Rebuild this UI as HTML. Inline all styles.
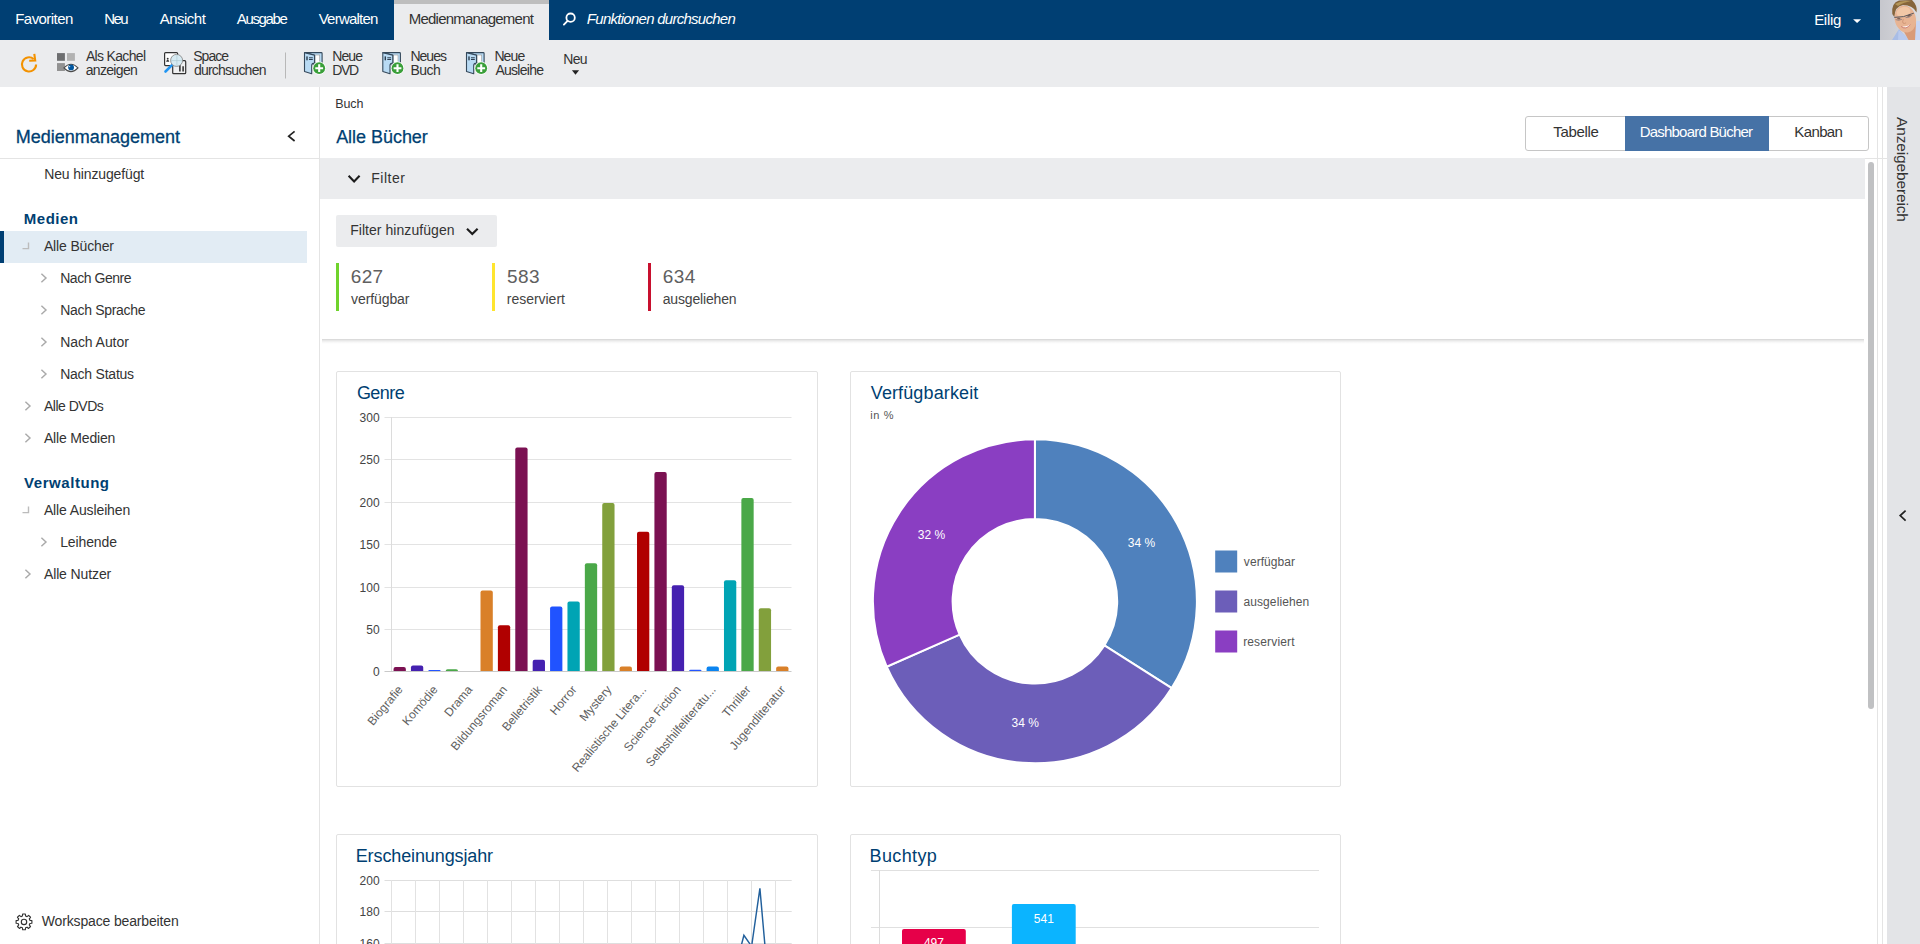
<!DOCTYPE html>
<html lang="de"><head><meta charset="utf-8"><title>Medienmanagement</title>
<style>
html,body{margin:0;padding:0;width:1920px;height:944px;overflow:hidden;}
#root{position:relative;width:1920px;height:944px;overflow:hidden;background:#fff;}
body{width:1920px;height:944px;overflow:hidden;background:#fff;position:relative;font-family:"Liberation Sans",sans-serif;}
.a{position:absolute;}
.t{position:absolute;white-space:nowrap;font-family:"Liberation Sans",sans-serif;}
svg{position:absolute;left:0;top:0;overflow:visible;}
svg text{font-family:"Liberation Sans",sans-serif;}
.card{position:absolute;border:1px solid #e2e2e2;border-radius:2px;background:#fff;box-sizing:border-box;}

</style></head><body><div id="root">
<div class="a" style="left:0;top:0;width:1920px;height:40px;background:#003f73"></div>
<div class="a" style="left:394px;top:0;width:155px;height:40px;background:#ebecee;border-top:4px solid #bebebe;box-sizing:border-box"></div>
<div class="a" style="left:0;top:40px;width:1920px;height:47px;background:#ebecee"></div>
<div class="a" style="left:319px;top:87px;width:1px;height:857px;background:#e4e4e4"></div>
<div class="a" style="left:0;top:158px;width:1887px;height:1px;background:#e4e4e4"></div>
<div class="a" style="left:0;top:231px;width:307px;height:32px;background:#e2ecf4"></div>
<div class="a" style="left:0;top:231px;width:4px;height:32px;background:#003f73"></div>
<div class="a" style="left:320px;top:158px;width:1545px;height:41px;background:#ebecee"></div>
<div class="a" style="left:322px;top:339px;width:1542px;height:5px;background:linear-gradient(to bottom,rgba(0,0,0,0.17),rgba(0,0,0,0.09) 30%,rgba(0,0,0,0.03) 65%,rgba(0,0,0,0))"></div>
<div class="a" style="left:336px;top:215px;width:161px;height:32px;background:#ebecee;border-radius:2px"></div>
<div class="a" style="left:336px;top:263px;width:3px;height:48px;background:#6fd32c"></div>
<div class="a" style="left:492px;top:263px;width:3px;height:48px;background:#ffe52e"></div>
<div class="a" style="left:648px;top:263px;width:3px;height:48px;background:#c8102e"></div>
<div class="a" style="left:1525px;top:116px;width:344px;height:35px;border:1px solid #c6c6c6;border-radius:3px;box-sizing:border-box;background:#fff"></div>
<div class="a" style="left:1625px;top:116px;width:144px;height:35px;background:#4672a6"></div>
<div class="a" style="left:1877px;top:87px;width:1px;height:857px;background:#e4e4e4"></div>
<div class="a" style="left:1882px;top:87px;width:1px;height:857px;background:#e4e4e4"></div>
<div class="a" style="left:1887px;top:87px;width:33px;height:857px;background:#e3e4e7"></div>
<div class="a" style="left:1868px;top:162px;width:6px;height:547px;background:#c0c1c3;border-radius:3px"></div>
<span class="v" style="position:absolute;white-space:nowrap;left:1894px;top:117px;font-size:15.5px;line-height:16px;color:#333;writing-mode:vertical-rl;letter-spacing:-0.15px">Anzeigebereich</span>
<div class="card" style="left:336px;top:371px;width:482px;height:416px"></div>
<div class="card" style="left:850px;top:371px;width:491px;height:416px"></div>
<div class="card" style="left:336px;top:834px;width:482px;height:416px"></div>
<div class="card" style="left:850px;top:834px;width:491px;height:416px"></div>
<svg width="1920" height="944" viewBox="0 0 1920 944">
<defs>
<filter id="bl" x="-10%" y="-10%" width="120%" height="120%"><feGaussianBlur stdDeviation="0.7"/></filter>
<clipPath id="avc"><rect x="1880" y="0" width="40" height="40"/></clipPath>
<linearGradient id="avg" x1="0" x2="1" y1="0" y2="0"><stop offset="0" stop-color="#c6c7cd"/><stop offset="1" stop-color="#dcdce0"/></linearGradient>
<g id="book">
 <path d="M0.6,0.7 H17.4 Q18.2,0.7 18.2,1.5 V14 H10 V3.2 Z" fill="#b9dbf4" stroke="#35495b" stroke-width="1.1" stroke-linejoin="round"/>
 <rect x="11.2" y="3.1" width="4.6" height="7.4" fill="#fff" stroke="#999" stroke-width="0.6"/>
 <path d="M0.6,0.9 L10.6,3.2 V11.2 Q7.8,11.4 7.8,13.4 V21.8 L0.6,19.6 Z" fill="#b9dbf4" stroke="#35495b" stroke-width="1.1" stroke-linejoin="round"/>
 <rect x="2.4" y="4.5" width="1.4" height="3.9" fill="#2c3e4e"/>
 <path d="M5.1,5.9 H8.9 M5.1,7.6 H8.9" stroke="#2c3e4e" stroke-width="1"/>
 <circle cx="15.3" cy="16.3" r="6.6" fill="#fff"/>
 <circle cx="15.3" cy="16.3" r="5.9" fill="#3a9f3a"/>
 <path d="M11.4,16.3 H19.2 M15.3,12.4 V20.2" stroke="#fff" stroke-width="2.1"/>
</g>
</defs>
<circle cx="570.6" cy="17.7" r="4.2" fill="none" stroke="#fff" stroke-width="1.8"/><path d="M567.6,20.9 L563.9,24.6" stroke="#fff" stroke-width="1.9" stroke-linecap="round"/>
<path d="M1853.1,19.2 h8 l-4,3.8 z" fill="#fff"/>
<g clip-path="url(#avc)"><rect x="1880" y="0" width="40" height="40" fill="url(#avg)"/>
<g filter="url(#bl)">
<path d="M1892,40 L1899,29 L1908,40 Z" fill="#a9bde6"/>
<path d="M1898,40 L1898.5,30 L1906,36 L1908.5,40 Z" fill="#b9caee"/>
<path d="M1914,40 L1916.5,21 L1920,21 L1920,40 Z" fill="#c9d6f4"/>
<path d="M1903,30 L1916,22 L1915,40 L1908.5,40 Z" fill="#d99a78"/>
<ellipse cx="1905.3" cy="19" rx="10.6" ry="13.6" transform="rotate(-14 1905.3 19)" fill="#e8b493"/>
<ellipse cx="1903.5" cy="12" rx="7" ry="5" transform="rotate(-14 1903.5 12)" fill="#f1c7a6"/>
<path d="M1892.3,14 Q1891,3 1899,0.5 L1912,0 Q1918,6 1916.5,12.5 Q1913,5 1903,5 Q1895,6 1894.3,17 Z" fill="#86653a"/>
<path d="M1895,4 Q1903,-1 1912,2 Q1906,1 1898,6 Z" fill="#b39558"/>
<path d="M1894.3,17.4 L1903.5,16.6 L1913.8,13.2" stroke="#55555c" stroke-width="1.0" fill="none"/>
<path d="M1895.6,19.6 q3.2,1.6 6.4,-0.4 M1905.6,17.6 q3.6,0.4 6.6,-2.6" stroke="#7d747c" stroke-width="0.9" fill="none" opacity="0.8"/>
<ellipse cx="1898.8" cy="18.6" rx="1.7" ry="0.9" fill="#5c4a44" opacity="0.75"/><ellipse cx="1909" cy="15.7" rx="1.8" ry="0.9" transform="rotate(-18 1909 15.7)" fill="#5c4a44" opacity="0.75"/>
<path d="M1903.3,19 q-1.2,3.4 -0.2,4.2 q1.6,0.6 3,-0.4" stroke="#c98f70" stroke-width="0.8" fill="none"/>
<path d="M1901.2,26 Q1906,27.6 1910,24.2 Q1907,29.6 1901.2,26 Z" fill="#fff"/>
<path d="M1901,26.4 Q1906,30.5 1910.3,24.4" stroke="#c97f7a" stroke-width="0.9" fill="none"/>
</g></g>
<path d="M36.1,64.4 A7.1,7.1 0 1 1 33.6,59" fill="none" stroke="#f39200" stroke-width="2.1"/><path d="M29.2,60.7 L35.2,60.4 L34.3,53.9" fill="none" stroke="#f39200" stroke-width="2.1"/>
<rect x="57" y="53.1" width="7.9" height="7.7" fill="#6d6e70"/><rect x="67" y="53.1" width="7.9" height="7.7" fill="#b2b2b2"/><rect x="57" y="63.1" width="7.9" height="7.9" fill="#929292"/>
<path d="M63.9,67.9 Q71,60.6 78,67.9 Q71,75.4 63.9,67.9 Z" fill="#fff" stroke="#4a4a4a" stroke-width="1.1"/><circle cx="71.1" cy="67.4" r="2.9" fill="#00569f"/><circle cx="69.6" cy="66.6" r="0.7" fill="#cfe3f5"/>
<rect x="164.6" y="52.6" width="13" height="13" rx="1" fill="#fff" stroke="#333" stroke-width="1.2"/>
<path d="M166.1,61.8 L166.9,59.9 h1.6 l0.8,1.9 z" fill="#333"/><circle cx="167.7" cy="58.7" r="0.95" fill="#333"/>
<rect x="172.7" y="60.7" width="13" height="13" rx="1" fill="#eff0f1" stroke="#333" stroke-width="1.2"/>
<path d="M179.9,64.9 V71.6 M183.1,66.3 V71.6" stroke="#2a2a2a" stroke-width="1.5"/>
<path d="M172.2,64.9 L165.5,71.5" stroke="#2196f3" stroke-width="2.6" stroke-linecap="round"/>
<circle cx="176.6" cy="60.4" r="6" fill="#d7ebf3" stroke="#8a8a8a" stroke-width="0.9"/><path d="M176.9,55 V65.8 M171,60.6 H182" stroke="#a9c4cc" stroke-width="0.6"/>
<rect x="285" y="52.5" width="1" height="26" fill="#b8b8b8"/>
<use href="#book" x="303.9" y="51.9"/>
<use href="#book" x="382.2" y="51.9"/>
<use href="#book" x="465.9" y="51.9"/>
<path d="M571.9,70.2 h7.2 l-3.6,4.6 z" fill="#222"/>
<path d="M294.6,131.4 L288.7,136.2 L294.6,141" fill="none" stroke="#222" stroke-width="1.7"/>
<path d="M41.4,273.7 L46.0,278 L41.4,282.3" fill="none" stroke="#aaaaaa" stroke-width="1.45"/>
<path d="M41.4,305.7 L46.0,310 L41.4,314.3" fill="none" stroke="#aaaaaa" stroke-width="1.45"/>
<path d="M41.4,337.7 L46.0,342 L41.4,346.3" fill="none" stroke="#aaaaaa" stroke-width="1.45"/>
<path d="M41.4,369.7 L46.0,374 L41.4,378.3" fill="none" stroke="#aaaaaa" stroke-width="1.45"/>
<path d="M41.4,537.7 L46.0,542 L41.4,546.3" fill="none" stroke="#aaaaaa" stroke-width="1.45"/>
<path d="M25.4,401.7 L30.0,406 L25.4,410.3" fill="none" stroke="#aaaaaa" stroke-width="1.45"/>
<path d="M25.4,433.7 L30.0,438 L25.4,442.3" fill="none" stroke="#aaaaaa" stroke-width="1.45"/>
<path d="M25.4,569.7 L30.0,574 L25.4,578.3" fill="none" stroke="#aaaaaa" stroke-width="1.45"/>
<path d="M22.5,248.6 H28.5 V242.6" fill="none" stroke="#bcbcbc" stroke-width="1.4"/>
<path d="M22.5,512.6 H28.5 V506.6" fill="none" stroke="#bcbcbc" stroke-width="1.4"/>
<path d="M22.43,916.01 L22.65,914.02 L25.35,914.02 L25.57,916.01 L27.06,916.62 L28.62,915.37 L30.53,917.28 L29.28,918.84 L29.89,920.33 L31.88,920.55 L31.88,923.25 L29.89,923.47 L29.28,924.96 L30.53,926.52 L28.62,928.43 L27.06,927.18 L25.57,927.79 L25.35,929.78 L22.65,929.78 L22.43,927.79 L20.94,927.18 L19.38,928.43 L17.47,926.52 L18.72,924.96 L18.11,923.47 L16.12,923.25 L16.12,920.55 L18.11,920.33 L18.72,918.84 L17.47,917.28 L19.38,915.37 L20.94,916.62 Z" fill="none" stroke="#333" stroke-width="1.15" stroke-linejoin="round"/><circle cx="24.0" cy="921.9" r="2.7" fill="none" stroke="#333" stroke-width="1.15"/>
<path d="M348.6,175.8 L354.1,181.4 L359.6,175.8" fill="none" stroke="#1c1c1c" stroke-width="2.1"/>
<path d="M467,228.7 L472.3,234.1 L477.6,228.7" fill="none" stroke="#1c1c1c" stroke-width="2.1"/>
<path d="M1905.6,510.6 L1900.2,515.6 L1905.6,520.6" fill="none" stroke="#222" stroke-width="1.7"/>
<rect x="384.5" y="629" width="407.0" height="1" fill="#e3e3e3"/>
<rect x="384.5" y="587" width="407.0" height="1" fill="#e3e3e3"/>
<rect x="384.5" y="544" width="407.0" height="1" fill="#e3e3e3"/>
<rect x="384.5" y="502" width="407.0" height="1" fill="#e3e3e3"/>
<rect x="384.5" y="459" width="407.0" height="1" fill="#e3e3e3"/>
<rect x="384.5" y="417" width="407.0" height="1" fill="#e3e3e3"/>
<rect x="391.0" y="417.0" width="1" height="254.5" fill="#dcdcdc"/>
<text x="379.6" y="675.90" font-size="12" fill="#444" text-anchor="end">0</text>
<text x="379.6" y="633.90" font-size="12" fill="#444" text-anchor="end">50</text>
<text x="379.6" y="591.90" font-size="12" fill="#444" text-anchor="end">100</text>
<text x="379.6" y="548.90" font-size="12" fill="#444" text-anchor="end">150</text>
<text x="379.6" y="506.90" font-size="12" fill="#444" text-anchor="end">200</text>
<text x="379.6" y="463.90" font-size="12" fill="#444" text-anchor="end">250</text>
<text x="379.6" y="421.90" font-size="12" fill="#444" text-anchor="end">300</text>
<path d="M393.55,671.0 V669.10 Q393.55,667.10 395.55,667.10 H403.85 Q405.85,667.10 405.85,669.10 V671.0 Z" fill="#7b1152"/>
<path d="M410.94,671.0 V667.49 Q410.94,665.49 412.94,665.49 H421.24 Q423.24,665.49 423.24,667.49 V671.0 Z" fill="#4521b0"/>
<path d="M428.33,671.0 V671.00 Q428.33,670.07 429.26,670.07 H439.70 Q440.63,670.07 440.63,671.00 V671.0 Z" fill="#2456ff"/>
<path d="M445.72,671.0 V671.00 Q445.72,669.13 447.59,669.13 H456.15 Q458.02,669.13 458.02,671.00 V671.0 Z" fill="#4aa848"/>
<path d="M480.50,671.0 V592.41 Q480.50,590.41 482.50,590.41 H490.80 Q492.80,590.41 492.80,592.41 V671.0 Z" fill="#d98029"/>
<path d="M497.89,671.0 V627.19 Q497.89,625.19 499.89,625.19 H508.19 Q510.19,625.19 510.19,627.19 V671.0 Z" fill="#b00000"/>
<path d="M515.28,671.0 V449.46 Q515.28,447.46 517.28,447.46 H525.58 Q527.58,447.46 527.58,449.46 V671.0 Z" fill="#7b1152"/>
<path d="M532.68,671.0 V661.72 Q532.68,659.72 534.68,659.72 H542.98 Q544.98,659.72 544.98,661.72 V671.0 Z" fill="#4521b0"/>
<path d="M550.07,671.0 V608.53 Q550.07,606.53 552.07,606.53 H560.37 Q562.37,606.53 562.37,608.53 V671.0 Z" fill="#2053ff"/>
<path d="M567.46,671.0 V603.44 Q567.46,601.44 569.46,601.44 H577.76 Q579.76,601.44 579.76,603.44 V671.0 Z" fill="#00a4b4"/>
<path d="M584.85,671.0 V565.26 Q584.85,563.26 586.85,563.26 H595.15 Q597.15,563.26 597.15,565.26 V671.0 Z" fill="#4aa848"/>
<path d="M602.24,671.0 V505.03 Q602.24,503.03 604.24,503.03 H612.54 Q614.54,503.03 614.54,505.03 V671.0 Z" fill="#82a03c"/>
<path d="M619.63,671.0 V668.42 Q619.63,666.42 621.63,666.42 H629.93 Q631.93,666.42 631.93,668.42 V671.0 Z" fill="#d98029"/>
<path d="M637.02,671.0 V533.87 Q637.02,531.87 639.02,531.87 H647.32 Q649.32,531.87 649.32,533.87 V671.0 Z" fill="#b00000"/>
<path d="M654.42,671.0 V474.07 Q654.42,472.07 656.42,472.07 H664.72 Q666.72,472.07 666.72,474.07 V671.0 Z" fill="#7b1152"/>
<path d="M671.81,671.0 V587.32 Q671.81,585.32 673.81,585.32 H682.11 Q684.11,585.32 684.11,587.32 V671.0 Z" fill="#4521b0"/>
<path d="M689.20,671.0 V671.00 Q689.20,669.73 690.47,669.73 H700.23 Q701.50,669.73 701.50,671.00 V671.0 Z" fill="#2456ff"/>
<path d="M706.59,671.0 V668.59 Q706.59,666.59 708.59,666.59 H716.89 Q718.89,666.59 718.89,668.59 V671.0 Z" fill="#0b84f0"/>
<path d="M723.98,671.0 V582.23 Q723.98,580.23 725.98,580.23 H734.28 Q736.28,580.23 736.28,582.23 V671.0 Z" fill="#00a4b4"/>
<path d="M741.37,671.0 V499.94 Q741.37,497.94 743.37,497.94 H751.67 Q753.67,497.94 753.67,499.94 V671.0 Z" fill="#4aa848"/>
<path d="M758.76,671.0 V610.22 Q758.76,608.22 760.76,608.22 H769.06 Q771.06,608.22 771.06,610.22 V671.0 Z" fill="#82a03c"/>
<path d="M776.15,671.0 V668.42 Q776.15,666.42 778.15,666.42 H786.45 Q788.45,666.42 788.45,668.42 V671.0 Z" fill="#d98029"/>
<rect x="384.5" y="671.0" width="407.0" height="1" fill="#c9c9c9"/>
<text transform="translate(403.40,689.90) rotate(-50)" font-size="12" fill="#606060" text-anchor="end">Biografie</text>
<text transform="translate(438.18,689.90) rotate(-50)" font-size="12" fill="#606060" text-anchor="end">Komödie</text>
<text transform="translate(472.96,689.90) rotate(-50)" font-size="12" fill="#606060" text-anchor="end">Drama</text>
<text transform="translate(507.74,689.90) rotate(-50)" font-size="12" fill="#606060" text-anchor="end">Bildungsroman</text>
<text transform="translate(542.53,689.90) rotate(-50)" font-size="12" fill="#606060" text-anchor="end">Belletristik</text>
<text transform="translate(577.31,689.90) rotate(-50)" font-size="12" fill="#606060" text-anchor="end">Horror</text>
<text transform="translate(612.09,689.90) rotate(-50)" font-size="12" fill="#606060" text-anchor="end">Mystery</text>
<text transform="translate(646.87,689.90) rotate(-50)" font-size="12" fill="#606060" text-anchor="end">Realistische Litera...</text>
<text transform="translate(681.66,689.90) rotate(-50)" font-size="12" fill="#606060" text-anchor="end">Science Fiction</text>
<text transform="translate(716.44,689.90) rotate(-50)" font-size="12" fill="#606060" text-anchor="end">Selbsthilfeliteratu...</text>
<text transform="translate(751.22,689.90) rotate(-50)" font-size="12" fill="#606060" text-anchor="end">Thriller</text>
<text transform="translate(786.00,689.90) rotate(-50)" font-size="12" fill="#606060" text-anchor="end">Jugendliteratur</text>
<path d="M1034.90,439.30 A162.0,162.0 0 0 1 1171.67,688.12 L1104.38,645.41 A82.3,82.3 0 0 0 1034.90,519.00 Z" fill="#4f81bd" stroke="#fff" stroke-width="2"/>
<path d="M1171.67,688.12 A162.0,162.0 0 0 1 886.70,666.72 L959.61,634.54 A82.3,82.3 0 0 0 1104.38,645.41 Z" fill="#6c5eb9" stroke="#fff" stroke-width="2"/>
<path d="M886.70,666.72 A162.0,162.0 0 0 1 1034.90,439.30 L1034.90,519.00 A82.3,82.3 0 0 0 959.61,634.54 Z" fill="#8a3ec2" stroke="#fff" stroke-width="2"/>
<text x="1141.4" y="546.9" font-size="12" fill="#fff" text-anchor="middle">34 %</text>
<text x="1025.3" y="727.2" font-size="12" fill="#fff" text-anchor="middle">34 %</text>
<text x="931.5" y="539.2" font-size="12" fill="#fff" text-anchor="middle">32 %</text>
<rect x="1215.2" y="550.5" width="22" height="22" fill="#4f81bd"/>
<rect x="1215.2" y="590.5" width="22" height="22" fill="#6c5eb9"/>
<rect x="1215.2" y="630.5" width="22" height="22" fill="#8a3ec2"/>
<rect x="384.5" y="880.00" width="407.20000000000005" height="1" fill="#dedede"/>
<text x="379.6" y="884.70" font-size="12" fill="#444" text-anchor="end">200</text>
<rect x="384.5" y="911.00" width="407.20000000000005" height="1" fill="#dedede"/>
<text x="379.6" y="915.70" font-size="12" fill="#444" text-anchor="end">180</text>
<rect x="384.5" y="943.00" width="407.20000000000005" height="1" fill="#dedede"/>
<text x="379.6" y="947.70" font-size="12" fill="#444" text-anchor="end">160</text>
<rect x="391.00" y="880" width="1" height="70" fill="#e2e2e2"/>
<rect x="415.00" y="880" width="1" height="70" fill="#e2e2e2"/>
<rect x="439.00" y="880" width="1" height="70" fill="#e2e2e2"/>
<rect x="463.00" y="880" width="1" height="70" fill="#e2e2e2"/>
<rect x="487.00" y="880" width="1" height="70" fill="#e2e2e2"/>
<rect x="511.00" y="880" width="1" height="70" fill="#e2e2e2"/>
<rect x="535.00" y="880" width="1" height="70" fill="#e2e2e2"/>
<rect x="559.00" y="880" width="1" height="70" fill="#e2e2e2"/>
<rect x="583.00" y="880" width="1" height="70" fill="#e2e2e2"/>
<rect x="607.00" y="880" width="1" height="70" fill="#e2e2e2"/>
<rect x="631.00" y="880" width="1" height="70" fill="#e2e2e2"/>
<rect x="655.00" y="880" width="1" height="70" fill="#e2e2e2"/>
<rect x="679.00" y="880" width="1" height="70" fill="#e2e2e2"/>
<rect x="703.00" y="880" width="1" height="70" fill="#e2e2e2"/>
<rect x="727.00" y="880" width="1" height="70" fill="#e2e2e2"/>
<rect x="751.00" y="880" width="1" height="70" fill="#e2e2e2"/>
<rect x="775.00" y="880" width="1" height="70" fill="#e2e2e2"/>
<path d="M737.6,960 L743.9,935.3 L751.6,946.4 L759.9,888.4 L768,980" fill="none" stroke="#22609c" stroke-width="1.45" stroke-linejoin="miter"/>
<rect x="871" y="870" width="448" height="1" fill="#e0e0e0"/>
<rect x="871" y="927" width="448" height="1" fill="#e0e0e0"/>
<rect x="879" y="870" width="1" height="80" fill="#dcdcdc"/>
<path d="M902,950 V930.9 Q902,928.9 904,928.9 H963.8 Q965.8,928.9 965.8,930.9 V950 Z" fill="#e60049"/>
<path d="M1011.9,950 V905.9 Q1011.9,903.9 1013.9,903.9 H1073.7 Q1075.7,903.9 1075.7,905.9 V950 Z" fill="#0bb4ff"/>
<text x="1043.8" y="923" font-size="12" fill="#fff" text-anchor="middle">541</text>
<text x="933.9" y="946.6" font-size="12" fill="#fff" text-anchor="middle">497</text>
</svg>
<span class="t" style="left:15.24px;top:11.30px;font-size:15px;line-height:15px;color:#fff;letter-spacing:-0.556px;">Favoriten</span>
<span class="t" style="left:104.24px;top:11.30px;font-size:15px;line-height:15px;color:#fff;letter-spacing:-1.617px;">Neu</span>
<span class="t" style="left:159.77px;top:11.30px;font-size:15px;line-height:15px;color:#fff;letter-spacing:-0.518px;">Ansicht</span>
<span class="t" style="left:236.87px;top:11.30px;font-size:15px;line-height:15px;color:#fff;letter-spacing:-1.365px;">Ausgabe</span>
<span class="t" style="left:318.70px;top:11.30px;font-size:15px;line-height:15px;color:#fff;letter-spacing:-0.767px;">Verwalten</span>
<span class="t" style="left:408.78px;top:11.30px;font-size:15px;line-height:15px;color:#333;letter-spacing:-0.776px;">Medienmanagement</span>
<span class="t" style="left:586.86px;top:11.30px;font-size:15px;line-height:15px;color:#fff;font-style:italic;letter-spacing:-0.733px;">Funktionen durchsuchen</span>
<span class="t" style="left:1814.14px;top:12.30px;font-size:15px;line-height:15px;color:#fff;letter-spacing:-0.279px;">Eilig</span>
<span class="t" style="left:85.94px;top:49.15px;font-size:14px;line-height:14px;color:#333;letter-spacing:-0.675px;">Als Kachel</span>
<span class="t" style="left:85.66px;top:63.15px;font-size:14px;line-height:14px;color:#333;letter-spacing:-0.668px;">anzeigen</span>
<span class="t" style="left:193.31px;top:49.15px;font-size:14px;line-height:14px;color:#333;letter-spacing:-1.020px;">Space</span>
<span class="t" style="left:193.88px;top:63.15px;font-size:14px;line-height:14px;color:#333;letter-spacing:-0.758px;">durchsuchen</span>
<span class="t" style="left:332.28px;top:49.15px;font-size:14px;line-height:14px;color:#333;letter-spacing:-0.929px;">Neue</span>
<span class="t" style="left:332.28px;top:63.15px;font-size:14px;line-height:14px;color:#333;letter-spacing:-1.388px;">DVD</span>
<span class="t" style="left:410.52px;top:49.15px;font-size:14px;line-height:14px;color:#333;letter-spacing:-1.021px;">Neues</span>
<span class="t" style="left:410.52px;top:63.15px;font-size:14px;line-height:14px;color:#333;letter-spacing:-0.529px;">Buch</span>
<span class="t" style="left:494.38px;top:49.15px;font-size:14px;line-height:14px;color:#333;letter-spacing:-0.861px;">Neue</span>
<span class="t" style="left:495.43px;top:63.15px;font-size:14px;line-height:14px;color:#333;letter-spacing:-0.730px;">Ausleihe</span>
<span class="t" style="left:563.28px;top:52.15px;font-size:14px;line-height:14px;color:#333;letter-spacing:-0.667px;">Neu</span>
<span class="t" style="left:15.73px;top:127.76px;font-size:18px;line-height:18px;color:#003f72;-webkit-text-stroke:0.3px #003f72;letter-spacing:0.017px;">Medienmanagement</span>
<span class="t" style="left:44.16px;top:167.15px;font-size:14px;line-height:14px;color:#333;letter-spacing:-0.140px;">Neu hinzugefügt</span>
<span class="t" style="left:23.83px;top:211.30px;font-size:15px;line-height:15px;color:#003f72;font-weight:bold;letter-spacing:0.500px;">Medien</span>
<span class="t" style="left:43.92px;top:239.15px;font-size:14px;line-height:14px;color:#333;letter-spacing:-0.149px;">Alle Bücher</span>
<span class="t" style="left:60.16px;top:271.15px;font-size:14px;line-height:14px;color:#333;letter-spacing:-0.446px;">Nach Genre</span>
<span class="t" style="left:60.16px;top:303.15px;font-size:14px;line-height:14px;color:#333;letter-spacing:-0.304px;">Nach Sprache</span>
<span class="t" style="left:60.16px;top:335.15px;font-size:14px;line-height:14px;color:#333;letter-spacing:-0.067px;">Nach Autor</span>
<span class="t" style="left:60.16px;top:367.15px;font-size:14px;line-height:14px;color:#333;letter-spacing:-0.233px;">Nach Status</span>
<span class="t" style="left:43.92px;top:399.15px;font-size:14px;line-height:14px;color:#333;letter-spacing:-0.487px;">Alle DVDs</span>
<span class="t" style="left:43.92px;top:431.15px;font-size:14px;line-height:14px;color:#333;letter-spacing:-0.173px;">Alle Medien</span>
<span class="t" style="left:24.12px;top:475.30px;font-size:15px;line-height:15px;color:#003f72;font-weight:bold;letter-spacing:0.542px;">Verwaltung</span>
<span class="t" style="left:43.92px;top:503.15px;font-size:14px;line-height:14px;color:#333;letter-spacing:-0.126px;">Alle Ausleihen</span>
<span class="t" style="left:60.16px;top:535.15px;font-size:14px;line-height:14px;color:#333;letter-spacing:-0.115px;">Leihende</span>
<span class="t" style="left:43.92px;top:567.15px;font-size:14px;line-height:14px;color:#333;letter-spacing:-0.114px;">Alle Nutzer</span>
<span class="t" style="left:41.82px;top:914.15px;font-size:14px;line-height:14px;color:#333;letter-spacing:-0.153px;">Workspace bearbeiten</span>
<span class="t" style="left:335.14px;top:98.42px;font-size:12.5px;line-height:12.5px;color:#333;letter-spacing:-0.036px;">Buch</span>
<span class="t" style="left:336.15px;top:127.76px;font-size:18px;line-height:18px;color:#003f72;-webkit-text-stroke:0.25px #003f72;letter-spacing:-0.035px;">Alle Bücher</span>
<span class="t" style="left:371.16px;top:171.15px;font-size:14px;line-height:14px;color:#333;letter-spacing:0.529px;">Filter</span>
<span class="t" style="left:350.16px;top:223.15px;font-size:14px;line-height:14px;color:#333;letter-spacing:0.053px;">Filter hinzufügen</span>
<span class="t" style="left:350.87px;top:266.92px;font-size:19px;line-height:19px;color:#606060;letter-spacing:0.244px;">627</span>
<span class="t" style="left:507.12px;top:266.92px;font-size:19px;line-height:19px;color:#606060;letter-spacing:0.321px;">583</span>
<span class="t" style="left:662.87px;top:266.92px;font-size:19px;line-height:19px;color:#606060;letter-spacing:0.330px;">634</span>
<span class="t" style="left:351.02px;top:292.15px;font-size:14px;line-height:14px;color:#444;letter-spacing:-0.087px;">verfügbar</span>
<span class="t" style="left:506.80px;top:292.15px;font-size:14px;line-height:14px;color:#444;letter-spacing:-0.026px;">reserviert</span>
<span class="t" style="left:662.70px;top:292.15px;font-size:14px;line-height:14px;color:#444;letter-spacing:-0.161px;">ausgeliehen</span>
<span class="t" style="left:1553.24px;top:124.30px;font-size:15px;line-height:15px;color:#333;letter-spacing:-0.307px;">Tabelle</span>
<span class="t" style="left:1639.66px;top:124.30px;font-size:15px;line-height:15px;color:#fff;letter-spacing:-0.781px;">Dashboard Bücher</span>
<span class="t" style="left:1794.24px;top:124.30px;font-size:15px;line-height:15px;color:#333;letter-spacing:-0.598px;">Kanban</span>
<span class="t" style="left:356.90px;top:383.76px;font-size:18px;line-height:18px;color:#003f72;letter-spacing:-0.535px;">Genre</span>
<span class="t" style="left:870.76px;top:383.76px;font-size:18px;line-height:18px;color:#003f72;letter-spacing:0.119px;">Verfügbarkeit</span>
<span class="t" style="left:870.18px;top:409.69px;font-size:11px;line-height:11px;color:#555;letter-spacing:0.691px;">in %</span>
<span class="t" style="left:355.73px;top:846.76px;font-size:18px;line-height:18px;color:#003f72;letter-spacing:-0.113px;">Erscheinungsjahr</span>
<span class="t" style="left:869.62px;top:846.76px;font-size:18px;line-height:18px;color:#003f72;letter-spacing:0.368px;">Buchtyp</span>
<span class="t" style="left:1243.82px;top:556.34px;font-size:12px;line-height:12px;color:#555;letter-spacing:0.074px;">verfügbar</span>
<span class="t" style="left:1243.41px;top:596.34px;font-size:12px;line-height:12px;color:#555;letter-spacing:0.111px;">ausgeliehen</span>
<span class="t" style="left:1243.13px;top:636.34px;font-size:12px;line-height:12px;color:#555;letter-spacing:0.164px;">reserviert</span>
</div></body></html>
